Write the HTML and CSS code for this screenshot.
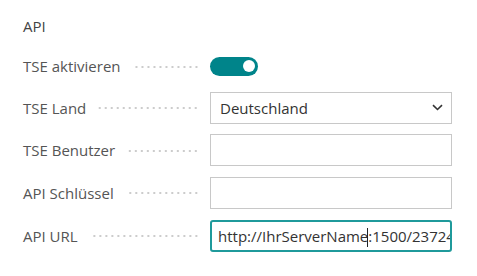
FILE: index.html
```html
<!DOCTYPE html>
<html lang="de">
<head>
<meta charset="utf-8">
<link rel="stylesheet" href="styles.css">
</head>
<body>
<div class="page">
  <h2 class="section-title">API</h2>
  <div class="fields">
    <div class="field field-toggle">
      <div class="label"><span class="label-text">TSE aktivieren</span><span class="leader"></span></div>
      <div class="control">
        <span class="toggle"><span class="knob"></span></span>
      </div>
    </div>
    <div class="field">
      <div class="label"><span class="label-text">TSE Land</span><span class="leader"></span></div>
      <div class="control">
        <div class="box select"><span class="value">Deutschland</span>
          <svg class="chevron" width="11" height="7" viewBox="0 0 11 7"><path d="M1 1.2 L5.5 5.5 L10 1.2" fill="none" stroke="#333" stroke-width="1.6"/></svg>
        </div>
      </div>
    </div>
    <div class="field">
      <div class="label"><span class="label-text">TSE Benutzer</span><span class="leader"></span></div>
      <div class="control"><div class="box"></div></div>
    </div>
    <div class="field">
      <div class="label"><span class="label-text">API Schlüssel</span><span class="leader"></span></div>
      <div class="control"><div class="box"></div></div>
    </div>
    <div class="field">
      <div class="label"><span class="label-text">API URL</span><span class="leader"></span></div>
      <div class="control"><div class="box focused"><span class="value">http://IhrServerName<span class="caret"></span>:1500/23724</span></div></div>
    </div>
  </div>
</div>
</body>
</html>
```

FILE: styles.css
```css
html, body {
  margin: 0;
  padding: 0;
  background: #ffffff;
}
body {
  font-family: "Open Sans", "Noto Sans", sans-serif;
  color: #555555;
}
.page {
  padding: 16px 25px 0 23px;
}
.section-title {
  margin: 0;
  font-size: 15px;
  font-weight: 400;
  line-height: 20px;
  color: #444444;
}
.fields {
  margin-top: 15px;
  display: flex;
  flex-direction: column;
  gap: 10.67px;
}
.field {
  display: grid;
  grid-template-columns: 187px 242px;
  height: 32px;
  align-items: center;
}
.field-toggle {
  height: 30px;
}
.label {
  display: flex;
  align-items: center;
  font-size: 15px;
  padding-right: 11px;
  white-space: nowrap;
}
.label-text {
  line-height: 20px;
}
.leader {
  flex: 1;
  height: 4px;
  margin-left: 12px;
  margin-top: 1px;
  background-image: radial-gradient(circle, #cccccc 0.8px, transparent 1.1px);
  background-size: 6px 4px;
  background-position: right center;
  background-repeat: repeat-x;
}
.control {
  height: 100%;
  display: flex;
  align-items: center;
}
.toggle {
  display: inline-flex;
  align-items: center;
  justify-content: flex-end;
  width: 48px;
  height: 19px;
  border-radius: 10px;
  background: #00848a;
  padding: 0 3px;
  box-sizing: border-box;
}
.knob {
  width: 12px;
  height: 12px;
  border-radius: 50%;
  background: #ffffff;
}
.box {
  box-sizing: border-box;
  width: 242px;
  height: 32px;
  border: 1px solid #c8c8c8;
  background: #fff;
  display: flex;
  align-items: center;
  padding: 0 9px;
  font-size: 15px;
  color: #333333;
  overflow: hidden;
  white-space: nowrap;
}
.select {
  justify-content: space-between;
  padding-right: 8px;
}
.chevron {
  flex: none;
}
.focused {
  border: 2px solid #1f9a9b;
  border-radius: 3px;
  padding-left: 6px;
  padding-right: 0;
}
.value {
  white-space: nowrap;
}
.caret {
  display: inline-block;
  width: 0;
  position: relative;
  vertical-align: middle;
}
.caret::after {
  content: "";
  position: absolute;
  left: -1px;
  top: -10px;
  width: 1px;
  height: 19px;
  background: #222;
}
```
